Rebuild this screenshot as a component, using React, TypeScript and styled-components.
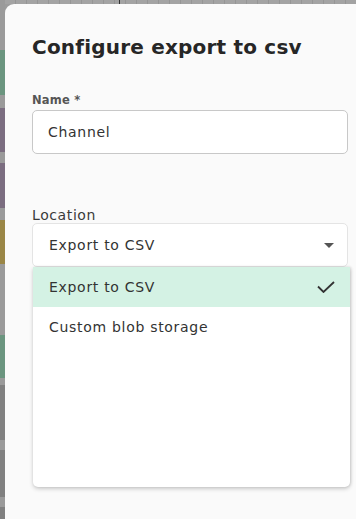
import React from "react";
import styled, { createGlobalStyle } from "styled-components";

const GlobalStyle = createGlobalStyle`
  html, body {
    margin: 0;
    padding: 0;
    background: #9c9c9c;
    font-family: "DejaVu Sans", "Open Sans", sans-serif;
    overflow: hidden;
  }
`;

export const Backdrop = styled.div`
  display: flex;
  width: 356px;
  height: 519px;
  overflow: hidden;
  background: #9c9c9c;
`;

export const SideStrip = styled.div`
  display: flex;
  flex-direction: column;
  width: 5px;
  flex-shrink: 0;
`;

export const StripBlock = styled.div<{ h: number; c: string }>`
  height: ${(p) => p.h}px;
  background: ${(p) => p.c};
  flex-shrink: 0;
`;

export const MainColumn = styled.div`
  display: flex;
  flex-direction: column;
  flex: 1;
  min-width: 0;
`;

export const TopStrip = styled.div`
  height: 4px;
  flex-shrink: 0;
  background: repeating-linear-gradient(
    90deg,
    #a3a3a3 0,
    #a3a3a3 10px,
    #959595 10px,
    #959595 11px
  );
  position: relative;
`;

export const TopMark = styled.div`
  position: absolute;
  left: 114px;
  top: 0;
  width: 1px;
  height: 4px;
  background: #333;
`;

export const Modal = styled.div`
  flex: 1;
  width: 380px;
  background: #fafafa;
  border-top-left-radius: 9px;
  padding: 31px 0 0 27px;
  box-sizing: border-box;
  display: flex;
  flex-direction: column;
`;

export const Title = styled.h2`
  margin: 0;
  font-size: 20px;
  line-height: 24px;
  font-weight: 700;
  color: #262626;
  letter-spacing: 0.2px;
`;

export const Field = styled.div<{ top: number }>`
  display: flex;
  flex-direction: column;
  width: 316px;
  margin-top: ${(p) => p.top}px;
`;

export const SmallLabel = styled.label`
  font-size: 11.5px;
  font-weight: 700;
  color: #555;
  line-height: 14px;
  margin-bottom: 3px;
  letter-spacing: 0.2px;
`;

export const Label = styled.label`
  font-size: 14px;
  color: #3a3a3a;
  line-height: 16px;
  letter-spacing: 0.6px;
`;

export const TextBox = styled.div`
  height: 44px;
  box-sizing: border-box;
  border: 1px solid #c8c8c8;
  border-radius: 5px;
  background: #fff;
  display: flex;
  align-items: center;
  padding-left: 15px;
  font-size: 14px;
  letter-spacing: 0.7px;
  color: #333;
`;

export const SelectWrap = styled.div`
  position: relative;
`;

export const SelectBox = styled(TextBox)`
  border-color: #e4e4e4;
  justify-content: space-between;
  padding-left: 16px;
  padding-right: 13px;
`;

export const Caret = styled.span`
  width: 0;
  height: 0;
  border-left: 5px solid transparent;
  border-right: 5px solid transparent;
  border-top: 5px solid #555;
`;

export const Menu = styled.div`
  position: absolute;
  left: 1px;
  top: 100%;
  width: 317px;
  height: 220px;
  background: #fff;
  border-radius: 0 0 5px 5px;
  box-shadow: 0 2px 4px rgba(0, 0, 0, 0.18), 1px 0 3px rgba(0, 0, 0, 0.12);
  display: flex;
  flex-direction: column;
  overflow: hidden;
`;

export const Option = styled.div<{ selected?: boolean }>`
  height: 40px;
  flex-shrink: 0;
  display: flex;
  align-items: center;
  justify-content: space-between;
  padding: 0 15px 0 16px;
  background: ${(p) => (p.selected ? "#d4f2e4" : "#fff")};
  font-size: 14px;
  letter-spacing: 0.7px;
  color: #333;
`;

const Check = () => (
  <svg width="18" height="12" viewBox="0 0 18 12" fill="none">
    <path d="M1 5.5L6.5 11L17 1" stroke="#333" strokeWidth="1.8" />
  </svg>
);

const stripBlocks: [number, string][] = [
  [50, "#9a9a9a"],
  [45, "#6b957f"],
  [13, "#9a9a9a"],
  [44, "#7b6d80"],
  [11, "#9a9a9a"],
  [45, "#7b6d80"],
  [12, "#9a9a9a"],
  [44, "#9a8646"],
  [71, "#9a9a9a"],
  [43, "#6b957f"],
  [7, "#9a9a9a"],
  [55, "#808080"],
  [10, "#9a9a9a"],
  [47, "#808080"],
  [10, "#9a9a9a"],
  [12, "#808080"],
];

const App = () => {
  return (
    <>
      <GlobalStyle />
      <Backdrop>
        <SideStrip>
          {stripBlocks.map(([h, c], i) => (
            <StripBlock key={i} h={h} c={c} />
          ))}
        </SideStrip>
        <MainColumn>
          <TopStrip>
            <TopMark />
          </TopStrip>
          <Modal>
            <Title>Configure export to csv</Title>
            <Field top={34}>
              <SmallLabel>Name *</SmallLabel>
              <TextBox>Channel</TextBox>
            </Field>
            <Field top={53}>
              <Label>Location</Label>
              <SelectWrap>
                <SelectBox>
                  Export to CSV
                  <Caret />
                </SelectBox>
                <Menu>
                  <Option selected>
                    Export to CSV
                    <Check />
                  </Option>
                  <Option>Custom blob storage</Option>
                </Menu>
              </SelectWrap>
            </Field>
          </Modal>
        </MainColumn>
      </Backdrop>
    </>
  );
};

export default App;
